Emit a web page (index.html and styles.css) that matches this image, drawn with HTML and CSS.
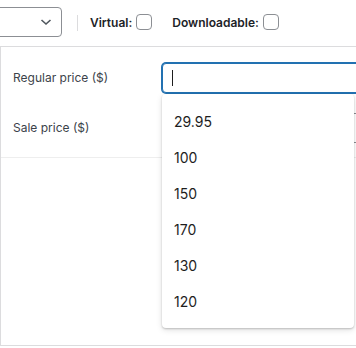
FILE: index.html
```html
<!DOCTYPE html>
<html lang="en">
<head>
  <meta charset="UTF-8">
  <meta name="viewport" content="width=device-width, initial-scale=1.0">
  <title>Product data</title>
  <link rel="stylesheet" href="styles.css">
</head>
<body>
  <div class="product-type">
    <div class="type-select">
      <svg class="chevron" width="12" height="8" viewBox="0 0 12 8">
        <path d="M1.5 2 L6 6 L10.5 2" fill="none" stroke="#50575e" stroke-width="1.6" />
      </svg>
    </div>
    <span class="divider"></span>
    <span class="type-option">Virtual: <span class="check"></span></span>
    <span class="type-option">Downloadable: <span class="check"></span></span>
  </div>

  <div class="panel">
    <div class="options-group">
      <div class="form-field">
        <span class="field-label">Regular price ($)</span>
        <div class="field-wrap">
          <div class="price-input focused"><span class="caret"></span></div>
          <!-- Suggestions list -->
          <ul class="suggestions">
            <li>29.95</li>
            <li>100</li>
            <li>150</li>
            <li>170</li>
            <li>130</li>
            <li>120</li>
          </ul>
        </div>
      </div>
      <div class="form-field">
        <span class="field-label">Sale price ($)</span>
        <div class="field-wrap">
          <div class="price-input"></div>
        </div>
      </div>
    </div>
  </div>
</body>
</html>
```

FILE: styles.css
```css
html, body {
  overflow: hidden;
}

body {
  margin: 0;
  width: 356px;
  height: 348px;
  background: #fff;
  font-family: Inter, "Noto Sans", sans-serif;
  font-size: 12px;
  color: #3c434a;
}

.product-type {
  display: flex;
  align-items: center;
  height: 47px;
  border-bottom: 1px solid #dcdcde;
  box-sizing: border-box;
}

.type-select {
  width: 72px;
  height: 30px;
  margin-left: -10px;
  margin-top: -2px;
  border: 1px solid #8c8f94;
  border-radius: 4px;
  box-sizing: border-box;
  display: flex;
  align-items: center;
  justify-content: flex-end;
  padding-right: 9px;
}

.chevron {
  display: block;
}

.divider {
  width: 1px;
  height: 16px;
  margin: 0 12px 0 15px;
  background: #dcdcde;
}

.type-option {
  display: flex;
  align-items: center;
  gap: 4px;
  margin-right: 20px;
  margin-top: -2px;
  font-weight: 600;
  color: #1d2327;
}

.check {
  width: 16px;
  height: 16px;
  border: 1px solid #8c8f94;
  border-radius: 4px;
  box-sizing: border-box;
}

.panel {
  height: 299px;
  border-left: 1px solid #dcdcde;
  border-bottom: 1px solid #dcdcde;
  box-sizing: border-box;
}

.options-group {
  display: flex;
  flex-direction: column;
  gap: 20px;
  padding: 16px 0 14px;
  border-bottom: 1px solid #eee;
}

.form-field {
  display: flex;
  align-items: flex-start;
}

.field-label {
  width: 149px;
  padding-left: 12px;
  margin-top: 5px;
  line-height: 19px;
  flex-shrink: 0;
}

.field-wrap {
  position: relative;
  flex: 1;
}

.price-input {
  width: 260px;
  height: 30px;
  border: 1px solid #8c8f94;
  border-radius: 4px;
  box-sizing: border-box;
  background: #fff;
}

.price-input.focused {
  border-color: #2271b1;
  box-shadow: 0 0 0 1px #2271b1;
  display: flex;
  align-items: center;
  padding-left: 9px;
}

.caret {
  width: 1px;
  height: 16px;
  background: #1e1e1e;
}

.suggestions {
  position: absolute;
  top: 31px;
  left: 0;
  width: 192px;
  margin: 0;
  padding: 10px 0 8px;
  list-style: none;
  background: #fff;
  border-radius: 4px;
  box-shadow: 0 1px 2px rgba(0, 0, 0, 0.2), 0 2px 6px rgba(0, 0, 0, 0.12);
  z-index: 2;
}

.suggestions li {
  height: 36px;
  line-height: 36px;
  padding-left: 12px;
  font-size: 14px;
  color: #1e1e1e;
}
```
